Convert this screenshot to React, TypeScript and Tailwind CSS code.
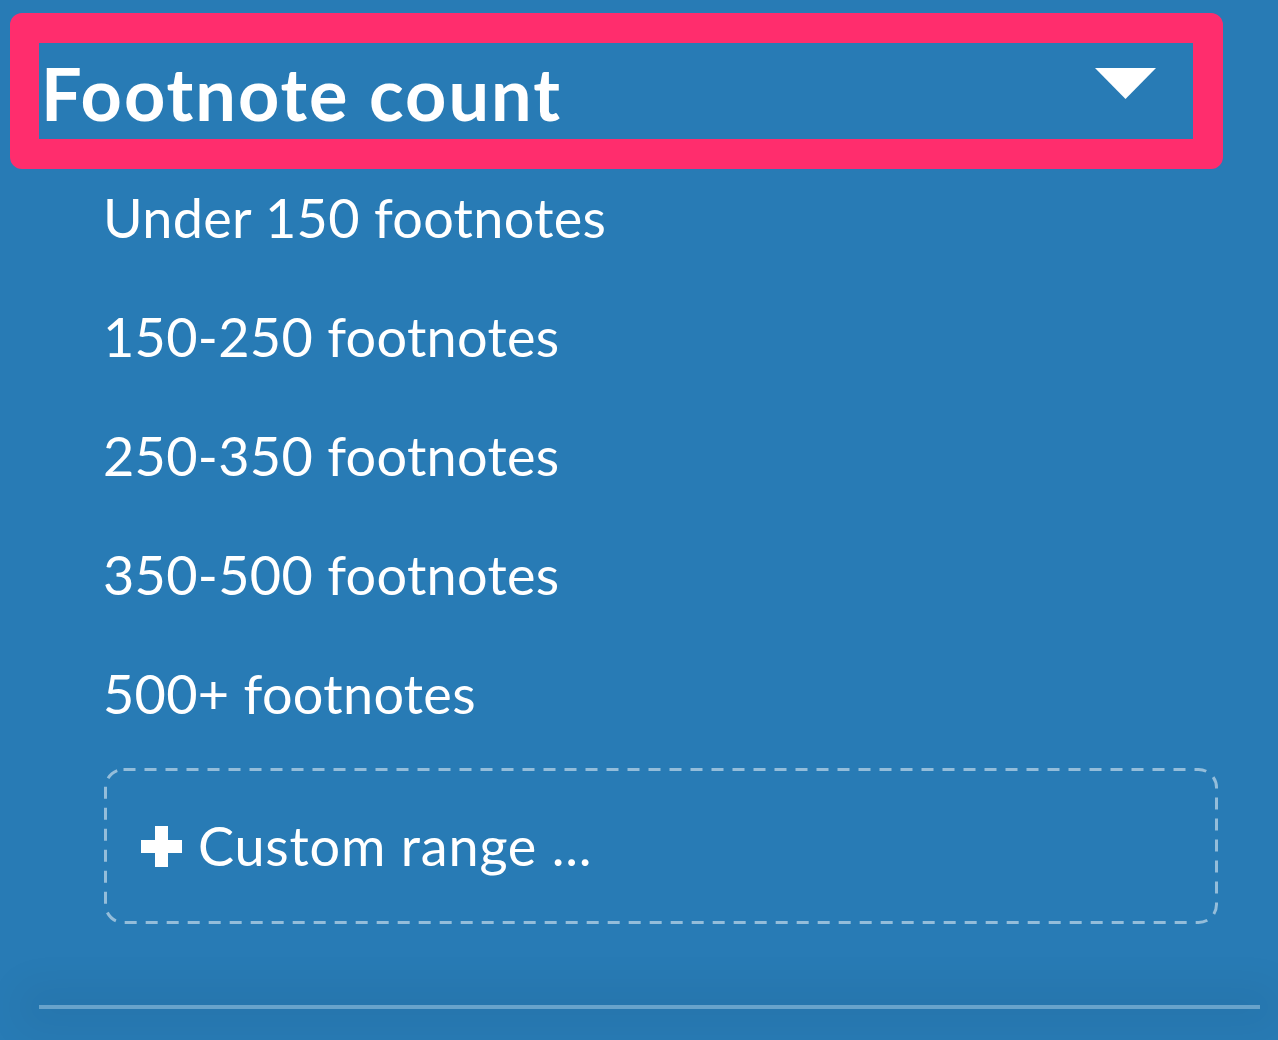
import React from 'react';

const OPTIONS = [
  'Under 150 footnotes',
  '150-250 footnotes',
  '250-350 footnotes',
  '350-500 footnotes',
  '500+ footnotes',
];

export default function App() {
  return (
    <div className="relative h-[1040px] w-full overflow-hidden bg-[#287bb5] pt-[13px] font-['Lato',_'Liberation_Sans',_sans-serif] text-white">
      {/* Highlighted filter header */}
      <button className="ml-[10px] flex h-[156px] w-[1213px] items-start justify-between rounded-[12px] border-[30px] border-l-[29px] border-[#ff2d6d] text-left">
        <span className="mt-[10px] pl-[2px] text-[72px] font-bold leading-[80px] tracking-[2px]">Footnote count</span>
        <svg width="61" height="31" viewBox="0 0 61 31" className="mr-[37px] mt-[25px]">
          <polygon points="0,0 61,0 30.5,31" fill="#fff" />
        </svg>
      </button>

      {/* Options */}
      <ul className="mt-[17px] flex flex-col gap-[55px] pl-[103px]">
        {OPTIONS.map((o) => (
          <li key={o} className="text-[54px] leading-[64px] tracking-[0.3px]">
            {o}
          </li>
        ))}
      </ul>

      {/* Custom range */}
      <div className="relative ml-[104px] mt-[42px] flex h-[156px] w-[1114px] items-center gap-[16px] pl-[37px]">
        <svg className="absolute inset-0" width="1114" height="156" viewBox="0 0 1114 156">
          <rect x="1.5" y="1.5" width="1111" height="153" rx="18" fill="none" stroke="rgba(255,255,255,0.5)" strokeWidth="3" strokeDasharray="12 9" />
        </svg>
        <svg width="41" height="41" viewBox="0 0 41 41">
          <rect x="14" y="0" width="13" height="41" fill="#fff" />
          <rect x="0" y="14" width="41" height="13" fill="#fff" />
        </svg>
        <span className="text-[54px] leading-[64px] tracking-[0.8px]">Custom range ...</span>
      </div>

      {/* Divider */}
      <div className="ml-[39px] mt-[81px] h-[4px] w-[1221px] bg-white/30 shadow-[0_0_40px_20px_rgba(0,0,0,0.05)]" />
    </div>
  );
}
